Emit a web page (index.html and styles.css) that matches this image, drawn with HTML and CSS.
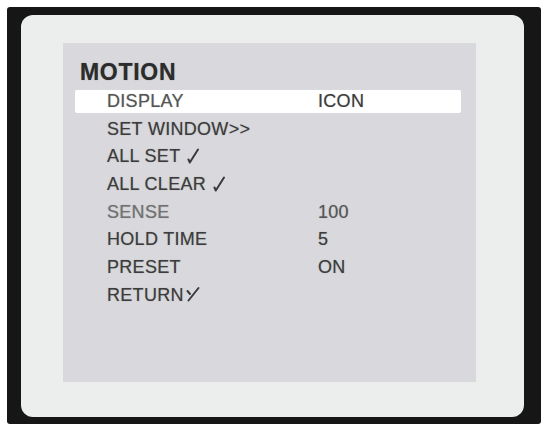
FILE: index.html
```html
<!DOCTYPE html>
<html>
<head>
<meta charset="utf-8">
<link rel="stylesheet" href="styles.css">
</head>
<body>
<div class="frame">
  <div class="panel">
    <div class="screen">
      <div class="title">MOTION</div>
      <div class="menu">
        <div class="row selected"><span class="label dim">DISPLAY</span><span class="value">ICON</span></div>
        <div class="row"><span class="label">SET WINDOW&gt;&gt;</span></div>
        <div class="row"><span class="label">ALL SET <svg class="tick" viewBox="0 0 12 16" width="12" height="16"><path d="M1.5 11.5 L2.8 14.5 L11 1.5" fill="none" stroke="#3a3a3a" stroke-width="2" stroke-linecap="round" stroke-linejoin="round"/></svg></span></div>
        <div class="row"><span class="label">ALL CLEAR <svg class="tick" viewBox="0 0 12 16" width="12" height="16"><path d="M1.5 11.5 L2.8 14.5 L11 1.5" fill="none" stroke="#3a3a3a" stroke-width="2" stroke-linecap="round" stroke-linejoin="round"/></svg></span></div>
        <div class="row"><span class="label light">SENSE</span><span class="value dim">100</span></div>
        <div class="row"><span class="label">HOLD TIME</span><span class="value">5</span></div>
        <div class="row"><span class="label">PRESET</span><span class="value">ON</span></div>
        <div class="row"><span class="label">RETURN<svg class="tick" viewBox="0 0 14 16" width="14" height="16"><path d="M1.5 5 L4 8 M2.5 14.5 L12.5 2" fill="none" stroke="#3a3a3a" stroke-width="2" stroke-linecap="round" stroke-linejoin="round"/></svg></span></div>
      </div>
    </div>
  </div>
</div>
</body>
</html>
```

FILE: styles.css
```css
html, body {
  margin: 0;
  padding: 0;
  background: #ffffff;
}
body {
  width: 546px;
  height: 429px;
  overflow: hidden;
  font-family: "Liberation Sans", Arial, sans-serif;
}
.frame {
  margin: 7px 0 0 7px;
  width: 534px;
  height: 417px;
  box-sizing: border-box;
  background: #161616;
  padding: 8px 17px 7px 14px;
  border-radius: 3px;
}
.panel {
  width: 503px;
  height: 402px;
  box-sizing: border-box;
  background: #eceeee;
  border-radius: 12px;
  padding: 28px 0 0 42px;
}
.screen {
  width: 413px;
  height: 339px;
  box-sizing: border-box;
  background: #d9d9dd;
  padding: 15.5px 0 0 12px;
}
.title {
  font-weight: bold;
  font-size: 23px;
  line-height: 26px;
  color: #2c2c2c;
  padding-left: 5px;
  letter-spacing: 0.7px;
  margin-bottom: 5.5px;
  text-shadow: 0 0 1px rgba(40,40,40,0.5);
}
.menu {
  display: flex;
  flex-direction: column;
  gap: 4.7px;
}
.row {
  display: flex;
  align-items: center;
  width: 386px;
  height: 23px;
  box-sizing: border-box;
  padding-left: 32px;
  font-size: 18px;
  line-height: 23px;
  color: #3c3c3c;
  letter-spacing: 0.3px;
  text-shadow: 0 0 1px rgba(60,60,60,0.45);
}
.row.selected {
  background: #ffffff;
  border-radius: 2px;
}
.label {
  width: 211px;
  display: flex;
  align-items: center;
  white-space: pre;
}
.tick {
  margin-left: 2px;
  margin-top: -2px;
}
.value {
  white-space: pre;
}
.dim {
  color: #555555;
}
.light {
  color: #727272;
}
```
